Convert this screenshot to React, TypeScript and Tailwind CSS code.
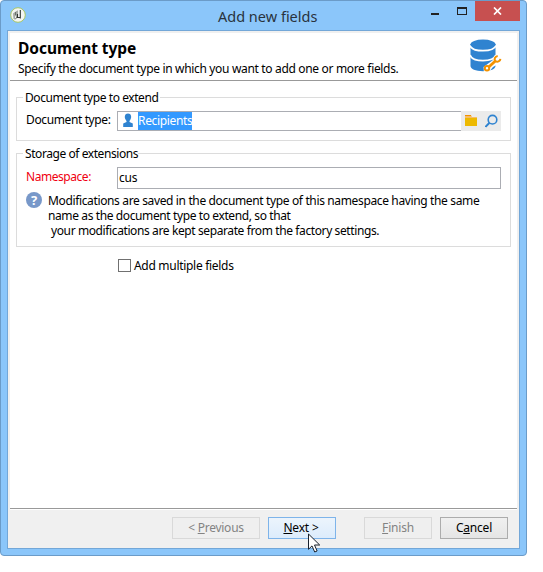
import type { ReactNode } from "react";

function Group({ title, titleClass, className, children }: { title: string; titleClass: string; className: string; children: ReactNode }) {
  return (
    <section className={`relative w-[495px] border border-[#dcdcdc] ${className}`}>
      <h2 className={`absolute -top-[8px] left-[6px] h-4 bg-white pl-[2px] leading-4 tracking-[-0.430px] whitespace-nowrap ${titleClass}`}>{title}</h2>
      {children}
    </section>
  );
}

function AppIcon() {
  return (
    <svg className="h-4 w-4" viewBox="0 0 16 16">
      <circle cx="8" cy="8" r="7.3" fill="#f4f5f2" stroke="#a9c763" />
      <path d="M3 6.500 5 5v7H3.500zM5.500 4.500 8 3.300V10l-2 1.500z" fill="#a5aaa5" />
      <path d="M5.500 5v3.500M7.500 9.500l-2.500 3" stroke="#6c726c" strokeWidth="1" />
      <path d="M10.300 3v8.500M7.500 7v3.500h3" fill="none" stroke="#303530" strokeWidth="1.100" />
    </svg>
  );
}

function DatabaseIcon() {
  return (
    <svg className="h-[34px] w-[32px]" viewBox="0 0 32 34">
      <path d="M.5 5v22c0 3 5 5.200 12.500 5.200S25.500 30 25.500 27V5z" fill="#2f83d0" />
      <path d="M0 6.500c1.500 4 7 5.200 13 5.200s11.500-1.200 13-5.200M0 16c1.500 4.200 7 5.600 13 5.600s11.500-1.400 13-5.600" fill="none" stroke="#fff" strokeWidth="1.800" />
      <ellipse cx="13" cy="5.200" rx="12.500" ry="4.700" fill="#2f83d0" />
      <path d="m13.500 28 9.500-7 1-4 6-2v9l-7 4-5 6h-4z" fill="#fff" />
      <path d="m18.800 28 6.500-6" stroke="#f39200" strokeWidth="2.800" />
      <circle cx="17" cy="29.300" r="2.200" fill="#fff" stroke="#f39200" strokeWidth="2" />
      <path d="M27.700 17c-3 .5-4 3.500-2.200 5 1.900 1.500 4.700.3 4.900-2.200" fill="none" stroke="#f39200" strokeWidth="2" />
    </svg>
  );
}

function Cursor() {
  return (
    <svg className="absolute top-[533px] left-[308px] h-5 w-[13px]" viewBox="0 0 13 20">
      <path d="M.5 1v15.300l3.500-3.400 2.700 6.100 2.400-1-2.600-6h5.200z" fill="#fff" stroke="#18202b" />
    </svg>
  );
}

export default function App() {
  return (
    <div className="relative h-[572px] w-[543px] overflow-hidden bg-white font-['Noto_Sans','Open_Sans',sans-serif] text-[12px] text-black">
      <div className="flex h-[556px] w-[527px] flex-col rounded-[4px] border border-[#6b9bc8] bg-[#8bc6fa] px-[6px] pb-[6px]">
        <header className="flex h-[29px] shrink-0 items-start">
          <div className="mt-[6px] ml-[3px]"><AppIcon /></div>
          <h1 className="mt-[4px] ml-[192px] w-[200px] text-[14.500px] leading-[22px] whitespace-nowrap text-[#29333d]"><span>Add new fields</span></h1>
          <div className="mt-[12px] ml-[13px] h-[2px] w-2 bg-[#222]" />
          <div className="mt-[6px] ml-[18px] h-2 w-[10px] border border-t-2 border-[#222]" />
          <div className="ml-2 flex h-5 w-[45px] items-center justify-center bg-[#c75050]">
            <svg className="h-[8px] w-[9px]" viewBox="0 0 9 8"><path d="m1 .5 7 7M8 .5l-7 7" stroke="#fff" strokeWidth="1.700" /></svg>
          </div>
        </header>
        <main className="flex h-[519px] w-[513px] shrink-0 flex-col border border-[#73a7d8] bg-[#f0f0f0] px-[2px] pt-[2px]">
          <div className="flex h-[48px] w-[507px] shrink-0 justify-between border-b border-[#999] bg-white pl-2">
            <div className="whitespace-nowrap">
              <p className="mt-[5px] text-[15.500px] leading-5 font-bold tracking-[-0.050px]"><span>Document type</span></p>
              <p className="mt-[3px] leading-4 tracking-[-0.330px]"><span>Specify the document type in which you want to add one or more fields.</span></p>
            </div>
            <div className="mt-[6px] mr-[15px]"><DatabaseIcon /></div>
          </div>
          <div className="flex h-[428px] w-[507px] shrink-0 flex-col border-b border-[#999] bg-white pl-[6px]">
            <Group title="Document type to extend" titleClass="w-[137px]" className="mt-[16px] h-[44px]">
              <div className="flex pt-[13px] pl-[9px]">
                <label className="w-[91px] leading-[18px] tracking-[-0.380px] whitespace-nowrap">Document type:</label>
                <div className="flex h-5 w-[344px] border border-r-0 border-[#abadb3] pl-[4px]">
                  <svg className="mt-[1px] h-[15px] w-[12px]" viewBox="0 0 12 15"><path d="M6 .5c-3.300 0-4 3.700-2.300 6.200l.8 1.300v1L1.200 10.400V14h9.600v-3.600L7.500 9V8l.8-1.300C10 4.200 9.300.5 6 .5z" fill="#2f83d0" /></svg>
                  <span className="ml-[4px] h-[18px] w-[54px] bg-[#3399ff] leading-[17px] tracking-[-0.330px] whitespace-nowrap text-white">Recipients</span>
                </div>
                <div className="flex h-5 w-10 bg-[#ebebeb]">
                  <svg className="mt-1 ml-1 h-[12px] w-3" viewBox="0 0 12 12"><path d="M0 0h6l1 2h5v2H0z" fill="#f5bd68" /><path d="M0 0h6v1H0z" fill="#f39200" /><path d="M0 3h12v8H0z" fill="#edb900" /></svg>
                  <svg className="mt-[3px] ml-2 h-[14px] w-[13px]" viewBox="0 0 13 14"><circle cx="7.500" cy="5.700" r="4.300" fill="none" stroke="#2f83d0" strokeWidth="1.600" /><path d="m4.500 8.800-4 4" stroke="#2f83d0" strokeWidth="2" /></svg>
                </div>
              </div>
            </Group>
            <Group title="Storage of extensions" titleClass="w-[115px]" className="mt-[12px] h-[94px]">
              <div className="flex pt-[13px] pl-[9px]">
                <label className="w-[91px] leading-[20px] tracking-[-0.450px] text-[#f00010]">Namespace:</label>
                <div className="h-[22px] w-[384px] border border-[#abadb3] pl-[1px] leading-[19px] tracking-[-0.200px]">cus</div>
              </div>
              <div className="flex pt-[3px] pl-[9px]">
                <div className="flex h-4 w-4 items-center justify-center rounded-full bg-[#7898c9] text-[13px] leading-4 font-bold text-white">?</div>
                <div className="ml-[6px] pt-px leading-[15px] whitespace-nowrap">
                  <p className="tracking-[-0.360px]"><span>Modifications are saved in the document type of this namespace having the same</span></p>
                  <p className="tracking-[-0.390px]"><span>name as the document type to extend, so that</span></p>
                  <p className="pl-[3px] tracking-[-0.390px]"><span>your modifications are kept separate from the factory settings.</span></p>
                </div>
              </div>
            </Group>
            <label className="mt-[12px] ml-[102px] flex items-start">
              <span className="h-[13px] w-[13px] border border-[#707070] bg-white" />
              <span className="-mt-px ml-[3px] leading-4 tracking-[-0.300px]">Add multiple fields</span>
            </label>
          </div>
          <div className="flex h-[38px] shrink-0 items-start border-t border-white pt-[7px] pl-[162px] leading-[20px] tracking-[-0.200px]">
            <button className="h-[22px] w-[88px] border border-[#d9d9d9] bg-[#efefef] tracking-[-0.250px] text-[#838383]">&lt; <u>P</u>revious</button>
            <button className="ml-2 h-[22px] w-[68px] border border-[#7eb4ea] bg-linear-to-b from-[#ecf4fc] to-[#dcecfc] pr-[2px] tracking-[-0.200px]"><u>N</u>ext &gt;</button>
            <button className="ml-[28px] h-[22px] w-[68px] border border-[#d9d9d9] bg-[#efefef] tracking-[-0.200px] text-[#838383]"><u>F</u>inish</button>
            <button className="ml-2 h-[22px] w-[68px] border border-[#acacac] bg-linear-to-b from-[#f0f0f0] to-[#e5e5e5] tracking-[-0.200px]">C<u>a</u>ncel</button>
          </div>
        </main>
      </div>
      <Cursor />
    </div>
  );
}
